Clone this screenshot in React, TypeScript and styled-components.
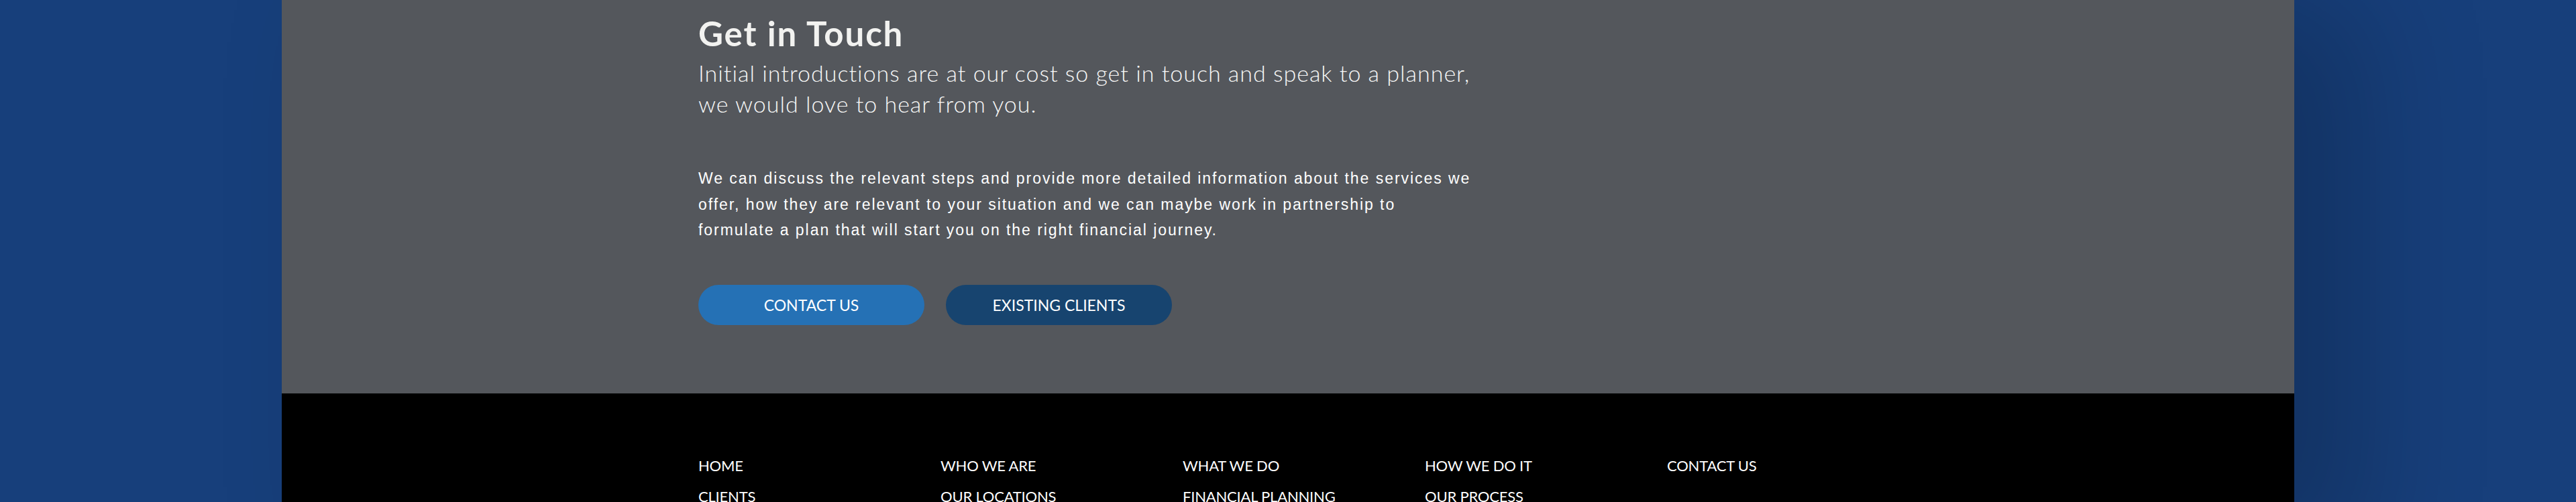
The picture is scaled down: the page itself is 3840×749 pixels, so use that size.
import React from "react";
import styled, { createGlobalStyle } from "styled-components";

const Global = createGlobalStyle`
  html, body { margin: 0; padding: 0; }
  body {
    background: #173f7b;
    font-family: "Lato", "Liberation Sans", sans-serif;
    overflow: hidden;
  }
`;

const Page = styled.div`
  display: flex;
  justify-content: center;
  min-height: 100vh;
`;

const Main = styled.main`
  width: 3000px;
  flex: none;
  box-shadow: 100px 0 180px rgba(0, 0, 0, 0.2);
  display: flex;
  flex-direction: column;
`;

const Touch = styled.section`
  background: #54575c;
  padding: 19px 0 102.5px;
`;

const Inner = styled.div`
  width: 1758px;
  margin: 0 auto;
`;

const Heading = styled.h2`
  margin: 0;
  font-family: "Lato", sans-serif;
  font-weight: 700;
  font-size: 51px;
  line-height: 61px;
  letter-spacing: 1.9px;
  color: #f2f2f0;
`;

const Lead = styled.p`
  margin: 6px 0 0;
  font-family: "Lato", sans-serif;
  font-weight: 300;
  font-size: 34px;
  line-height: 46px;
  letter-spacing: 1px;
  color: #f7f7f7;
  white-space: nowrap;
`;

const Body = styled.p`
  margin: 69px 0 0;
  font-family: "Liberation Sans", Arial, sans-serif;
  font-size: 23px;
  line-height: 38.5px;
  letter-spacing: 1.95px;
  color: #ffffff;
  white-space: nowrap;
`;

const Actions = styled.div`
  display: flex;
  gap: 32px;
  margin-top: 62px;
`;

const Pill = styled.a<{ $tone: "light" | "dark" }>`
  display: flex;
  align-items: center;
  justify-content: center;
  width: 337px;
  height: 60px;
  border-radius: 30px;
  background: ${(p) => (p.$tone === "light" ? "#2571b5" : "#17446f")};
  color: #ffffff;
  font-family: "Lato", sans-serif;
  font-size: 23px;
  font-weight: 400;
  text-transform: uppercase;
  text-decoration: none;
`;

const Footer = styled.footer`
  background: #000000;
  padding: 85px 0 80px;
  flex: 1;
`;

const Columns = styled.div`
  display: grid;
  grid-template-columns: repeat(5, 361px);
`;

const LinkList = styled.ul`
  list-style: none;
  margin: 0;
  padding: 0;
`;

const FootLink = styled.li`
  font-family: "Lato", sans-serif;
  font-size: 22px;
  line-height: 46px;
  color: #ffffff;
  text-transform: uppercase;
  letter-spacing: -0.2px;
`;

const columns: string[][] = [
  ["Home", "Clients"],
  ["Who We Are", "Our Locations"],
  ["What We Do", "Financial Planning"],
  ["How We Do It", "Our Process"],
  ["Contact Us"],
];

export default function App() {
  return (
    <>
      <Global />
      <Page>
        <Main>
          <Touch>
            <Inner>
              <Heading>Get in Touch</Heading>
              <Lead>
                Initial introductions are at our cost so get in touch and speak to a planner,
                <br />
                we would love to hear from you.
              </Lead>
              <Body>
                We can discuss the relevant steps and provide more detailed information about the services we
                <br />
                offer, how they are relevant to your situation and we can maybe work in partnership to
                <br />
                formulate a plan that will start you on the right financial journey.
              </Body>
              <Actions>
                <Pill $tone="light" href="#">Contact Us</Pill>
                <Pill $tone="dark" href="#">Existing Clients</Pill>
              </Actions>
            </Inner>
          </Touch>
          <Footer>
            <Inner>
              <Columns>
                {columns.map((col, i) => (
                  <LinkList key={i}>
                    {col.map((l) => (
                      <FootLink key={l}>{l}</FootLink>
                    ))}
                  </LinkList>
                ))}
              </Columns>
            </Inner>
          </Footer>
        </Main>
      </Page>
    </>
  );
}
